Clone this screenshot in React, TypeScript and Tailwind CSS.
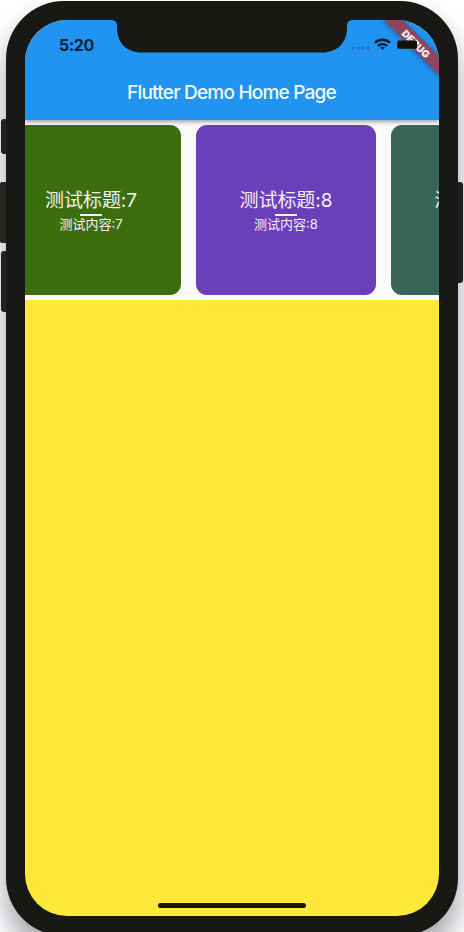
const cards = [
  { id: 7, color: "bg-[#3d6e0d]" },
  { id: 8, color: "bg-[#693fba]" },
  { id: 9, color: "bg-[#376659]" },
];

function Card({ id, color }: { id: number; color: string }) {
  return (
    <div className={`flex h-[170px] w-[180px] shrink-0 flex-col items-center rounded-[11px] pt-[63px] text-[#f4f0f4] ${color}`}>
      <div className="h-[25px] text-[19px] leading-[26px] tracking-[-0.05px] whitespace-nowrap">测试标题:{id}</div>
      <div className="h-[2px] w-[22px] translate-y-px bg-[#f4f0f4]" />
      <div className="h-[18px] text-[13px] leading-[18px] whitespace-nowrap">测试内容:{id}</div>
    </div>
  );
}

function StatusBar() {
  return (
    <div className="flex h-[44px] items-start pt-[16px]">
      <span className="ml-[34px] w-[292px] text-[16px] leading-[18px] font-bold tracking-[-0.35px] text-[#0a2037]">5:20</span>
      <svg className="mt-[10px] h-[4px] w-[20px]" viewBox="0 0 20 4" fill="#1c74bf">
        <circle cx="2" cy="2" r="1.6" />
        <circle cx="7" cy="2" r="1.6" />
        <circle cx="12" cy="2" r="1.6" />
        <circle cx="17" cy="2" r="1.6" />
      </svg>
      <svg className="mt-[2px] ml-[3px] h-[12px] w-[17px]" viewBox="0 0 17 12" fill="none" stroke="#071a2c" strokeWidth="2.3">
        <path d="M1 4.8C5.2.7 11.8.7 16 4.8" />
        <path d="M3.9 7.9C6.5 5.4 10.5 5.4 13.1 7.9" />
        <path d="M6.3 9.6C7.6 8.4 9.4 8.4 10.7 9.6L8.5 11.9Z" fill="#071a2c" stroke="none" />
      </svg>
    </div>
  );
}

function Notch() {
  return (
    <svg className="absolute top-0 left-[86px] h-[33px] w-[242px]" viewBox="0 0 242 33">
      <path d="M0 0C4 0 6 2 6 6V8C6 23 16 32.5 31 32.5H211C226 32.5 236 23 236 8V6C236 2 238 0 242 0Z" fill="#181815" />
    </svg>
  );
}

function DebugBanner() {
  return (
    <svg className="absolute top-0 right-0 h-[70px] w-[70px]" viewBox="0 0 70 70">
      <defs>
        <filter id="ribbonShadow" x="-20%" y="-20%" width="140%" height="140%">
          <feGaussianBlur stdDeviation="2.5" />
        </filter>
      </defs>
      <path d="M12 -2L72 58V40L30 -2Z" fill="#123b60" opacity=".65" filter="url(#ribbonShadow)" />
      <path d="M14 0L70 56V37L33 0Z" fill="#8e4660" transform="translate(0 -1)" />
      <text
        x="46.8"
        y="27.6"
        textAnchor="middle"
        transform="rotate(45 46.8 24)"
        className="fill-[#f4eff2] font-['Inter',sans-serif] text-[10px] font-black"
      >
        DEBUG
      </text>
      <rect x="28.3" y="20.5" width="19.7" height="8.3" rx="1.5" fill="#151004" />
    </svg>
  );
}

export default function App() {
  return (
    <div className="relative h-[932px] w-[464px] overflow-hidden bg-white font-['Inter','Noto_Sans_CJK_SC',sans-serif]">
      <div className="absolute top-[119px] left-px z-10 h-[35px] w-[10px] rounded-[3px] bg-[#20221f]" />
      <div className="absolute top-[182px] left-0 z-10 h-[61px] w-[10px] rounded-[2px] bg-[#2a2823]" />
      <div className="absolute top-[251px] left-px z-10 h-[61px] w-[10px] rounded-[3px] bg-[#202522]" />
      <div className="absolute top-[182px] right-px z-10 h-[101px] w-[10px] rounded-[3px] bg-[#20211e]" />
      <div className="relative z-20 mt-px ml-[6px] h-[935px] w-[452px] rounded-[58px] bg-[#181815] px-[19px] pt-[19px] shadow-[0_18px_28px_rgba(40,30,50,0.42)]">
        <div className="relative flex h-[896px] w-[414px] flex-col overflow-hidden rounded-[42px] bg-[#fee93a]">
          <header className="relative z-10 h-[100px] shrink-0 bg-[#2194f1] shadow-[0_2px_4px_rgba(0,0,0,0.35)]">
            <StatusBar />
            <h1 className="pt-[16px] pr-px text-center text-[19px] leading-[26px] font-medium tracking-[-0.78px] text-[#f6f7fa]">
              Flutter Demo Home Page
            </h1>
            <Notch />
            <DebugBanner />
          </header>
          <section className="h-[180px] shrink-0 overflow-hidden bg-[#faf9fb] py-[5px]">
            <div className="-ml-[24px] flex gap-[15px]">
              {cards.map((card) => (
                <Card key={card.id} id={card.id} color={card.color} />
              ))}
            </div>
          </section>
          <div className="flex flex-1 items-end justify-center pb-[8px]">
            <div className="h-[5px] w-[148px] rounded-full bg-[#191602]" />
          </div>
        </div>
      </div>
    </div>
  );
}
